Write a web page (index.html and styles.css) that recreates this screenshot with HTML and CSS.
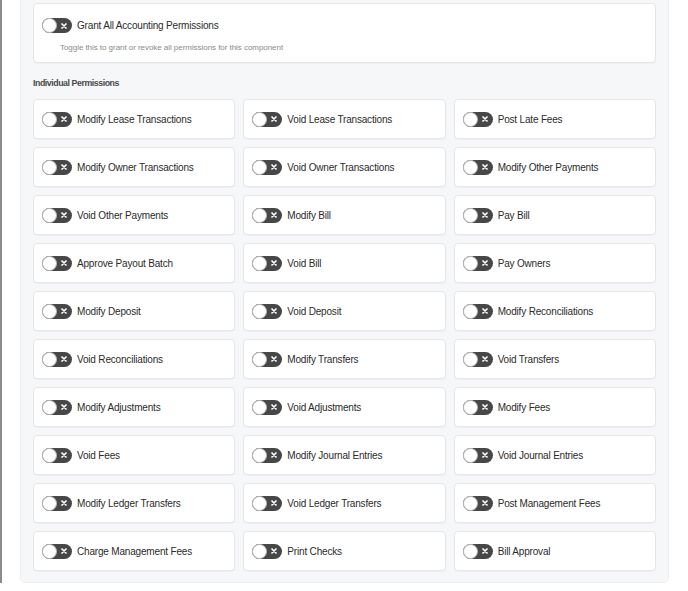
FILE: index.html
```html
<!DOCTYPE html>
<html lang="en">
<head>
    <meta charset="UTF-8">
    <meta name="viewport" content="width=device-width, initial-scale=1.0">
    <title>Accounting Permissions</title>
    <link rel="stylesheet" href="styles.css">
</head>
<body>
    <div class="page">
        <div class="panel">
            <div class="master-card">
                <label class="perm-row">
                    <span class="toggle"><span class="knob"></span><svg class="toggle-x" viewBox="0 0 6 6"><path d="M1 1L5 5M5 1L1 5"/></svg></span>
                    <span class="perm-label">Grant All Accounting Permissions</span>
                </label>
                <div class="master-hint">Toggle this to grant or revoke all permissions for this component</div>
            </div>

            <div class="section-title">Individual Permissions</div>

            <div class="perm-grid">
                <label class="perm-card"><span class="toggle"><span class="knob"></span><svg class="toggle-x" viewBox="0 0 6 6"><path d="M1 1L5 5M5 1L1 5"/></svg></span><span class="perm-label">Modify Lease Transactions</span></label>
                <label class="perm-card"><span class="toggle"><span class="knob"></span><svg class="toggle-x" viewBox="0 0 6 6"><path d="M1 1L5 5M5 1L1 5"/></svg></span><span class="perm-label">Void Lease Transactions</span></label>
                <label class="perm-card"><span class="toggle"><span class="knob"></span><svg class="toggle-x" viewBox="0 0 6 6"><path d="M1 1L5 5M5 1L1 5"/></svg></span><span class="perm-label">Post Late Fees</span></label>

                <label class="perm-card"><span class="toggle"><span class="knob"></span><svg class="toggle-x" viewBox="0 0 6 6"><path d="M1 1L5 5M5 1L1 5"/></svg></span><span class="perm-label">Modify Owner Transactions</span></label>
                <label class="perm-card"><span class="toggle"><span class="knob"></span><svg class="toggle-x" viewBox="0 0 6 6"><path d="M1 1L5 5M5 1L1 5"/></svg></span><span class="perm-label">Void Owner Transactions</span></label>
                <label class="perm-card"><span class="toggle"><span class="knob"></span><svg class="toggle-x" viewBox="0 0 6 6"><path d="M1 1L5 5M5 1L1 5"/></svg></span><span class="perm-label">Modify Other Payments</span></label>

                <label class="perm-card"><span class="toggle"><span class="knob"></span><svg class="toggle-x" viewBox="0 0 6 6"><path d="M1 1L5 5M5 1L1 5"/></svg></span><span class="perm-label">Void Other Payments</span></label>
                <label class="perm-card"><span class="toggle"><span class="knob"></span><svg class="toggle-x" viewBox="0 0 6 6"><path d="M1 1L5 5M5 1L1 5"/></svg></span><span class="perm-label">Modify Bill</span></label>
                <label class="perm-card"><span class="toggle"><span class="knob"></span><svg class="toggle-x" viewBox="0 0 6 6"><path d="M1 1L5 5M5 1L1 5"/></svg></span><span class="perm-label">Pay Bill</span></label>

                <label class="perm-card"><span class="toggle"><span class="knob"></span><svg class="toggle-x" viewBox="0 0 6 6"><path d="M1 1L5 5M5 1L1 5"/></svg></span><span class="perm-label">Approve Payout Batch</span></label>
                <label class="perm-card"><span class="toggle"><span class="knob"></span><svg class="toggle-x" viewBox="0 0 6 6"><path d="M1 1L5 5M5 1L1 5"/></svg></span><span class="perm-label">Void Bill</span></label>
                <label class="perm-card"><span class="toggle"><span class="knob"></span><svg class="toggle-x" viewBox="0 0 6 6"><path d="M1 1L5 5M5 1L1 5"/></svg></span><span class="perm-label">Pay Owners</span></label>

                <label class="perm-card"><span class="toggle"><span class="knob"></span><svg class="toggle-x" viewBox="0 0 6 6"><path d="M1 1L5 5M5 1L1 5"/></svg></span><span class="perm-label">Modify Deposit</span></label>
                <label class="perm-card"><span class="toggle"><span class="knob"></span><svg class="toggle-x" viewBox="0 0 6 6"><path d="M1 1L5 5M5 1L1 5"/></svg></span><span class="perm-label">Void Deposit</span></label>
                <label class="perm-card"><span class="toggle"><span class="knob"></span><svg class="toggle-x" viewBox="0 0 6 6"><path d="M1 1L5 5M5 1L1 5"/></svg></span><span class="perm-label">Modify Reconciliations</span></label>

                <label class="perm-card"><span class="toggle"><span class="knob"></span><svg class="toggle-x" viewBox="0 0 6 6"><path d="M1 1L5 5M5 1L1 5"/></svg></span><span class="perm-label">Void Reconciliations</span></label>
                <label class="perm-card"><span class="toggle"><span class="knob"></span><svg class="toggle-x" viewBox="0 0 6 6"><path d="M1 1L5 5M5 1L1 5"/></svg></span><span class="perm-label">Modify Transfers</span></label>
                <label class="perm-card"><span class="toggle"><span class="knob"></span><svg class="toggle-x" viewBox="0 0 6 6"><path d="M1 1L5 5M5 1L1 5"/></svg></span><span class="perm-label">Void Transfers</span></label>

                <label class="perm-card"><span class="toggle"><span class="knob"></span><svg class="toggle-x" viewBox="0 0 6 6"><path d="M1 1L5 5M5 1L1 5"/></svg></span><span class="perm-label">Modify Adjustments</span></label>
                <label class="perm-card"><span class="toggle"><span class="knob"></span><svg class="toggle-x" viewBox="0 0 6 6"><path d="M1 1L5 5M5 1L1 5"/></svg></span><span class="perm-label">Void Adjustments</span></label>
                <label class="perm-card"><span class="toggle"><span class="knob"></span><svg class="toggle-x" viewBox="0 0 6 6"><path d="M1 1L5 5M5 1L1 5"/></svg></span><span class="perm-label">Modify Fees</span></label>

                <label class="perm-card"><span class="toggle"><span class="knob"></span><svg class="toggle-x" viewBox="0 0 6 6"><path d="M1 1L5 5M5 1L1 5"/></svg></span><span class="perm-label">Void Fees</span></label>
                <label class="perm-card"><span class="toggle"><span class="knob"></span><svg class="toggle-x" viewBox="0 0 6 6"><path d="M1 1L5 5M5 1L1 5"/></svg></span><span class="perm-label">Modify Journal Entries</span></label>
                <label class="perm-card"><span class="toggle"><span class="knob"></span><svg class="toggle-x" viewBox="0 0 6 6"><path d="M1 1L5 5M5 1L1 5"/></svg></span><span class="perm-label">Void Journal Entries</span></label>

                <label class="perm-card"><span class="toggle"><span class="knob"></span><svg class="toggle-x" viewBox="0 0 6 6"><path d="M1 1L5 5M5 1L1 5"/></svg></span><span class="perm-label">Modify Ledger Transfers</span></label>
                <label class="perm-card"><span class="toggle"><span class="knob"></span><svg class="toggle-x" viewBox="0 0 6 6"><path d="M1 1L5 5M5 1L1 5"/></svg></span><span class="perm-label">Void Ledger Transfers</span></label>
                <label class="perm-card"><span class="toggle"><span class="knob"></span><svg class="toggle-x" viewBox="0 0 6 6"><path d="M1 1L5 5M5 1L1 5"/></svg></span><span class="perm-label">Post Management Fees</span></label>

                <label class="perm-card"><span class="toggle"><span class="knob"></span><svg class="toggle-x" viewBox="0 0 6 6"><path d="M1 1L5 5M5 1L1 5"/></svg></span><span class="perm-label">Charge Management Fees</span></label>
                <label class="perm-card"><span class="toggle"><span class="knob"></span><svg class="toggle-x" viewBox="0 0 6 6"><path d="M1 1L5 5M5 1L1 5"/></svg></span><span class="perm-label">Print Checks</span></label>
                <label class="perm-card"><span class="toggle"><span class="knob"></span><svg class="toggle-x" viewBox="0 0 6 6"><path d="M1 1L5 5M5 1L1 5"/></svg></span><span class="perm-label">Bill Approval</span></label>
            </div>
        </div>
    </div>
</body>
</html>
```

FILE: styles.css
```css
body {
    font-family: 'Liberation Sans', Arial, sans-serif;
    margin: 0;
    padding: 0;
    background-color: #fff;
    color: #333;
    overflow: hidden;
}
.page {
    min-height: 591px;
    border-left: 2px solid #8c8c8c;
    padding: 0 19px 0 18px;
    box-sizing: border-box;
}
.panel {
    margin-top: -10px;
    background-color: #f6f7f9;
    border: 1px solid #eceef1;
    border-radius: 5px;
    padding: 12px 12px 11px;
}
.master-card {
    background-color: #fff;
    border: 1px solid #e4e6e9;
    border-radius: 4px;
    padding: 14px 9px 9px 8px;
    box-shadow: 0 1px 1px rgba(0, 0, 0, 0.03);
}
.perm-row {
    display: flex;
    align-items: center;
    height: 15px;
}
.master-hint {
    margin-top: 10px;
    padding-left: 18px;
    font-size: 8px;
    letter-spacing: -0.05px;
    line-height: 10px;
    color: #8a8a8a;
}
.section-title {
    margin: 15px 0 11px;
    font-size: 8.8px;
    letter-spacing: -0.45px;
    line-height: 10px;
    font-weight: bold;
    color: #4a4a4a;
}
.perm-grid {
    display: grid;
    grid-template-columns: repeat(3, 1fr);
    gap: 8px;
}
.perm-card {
    display: flex;
    align-items: center;
    height: 40px;
    box-sizing: border-box;
    padding-left: 8px;
    background-color: #fff;
    border: 1px solid #e4e6e9;
    border-radius: 4px;
    box-shadow: 0 1px 1px rgba(0, 0, 0, 0.03);
}
.perm-label {
    margin-left: 5px;
    font-size: 10px;
    letter-spacing: -0.18px;
    line-height: 15px;
    color: #2b2b2b;
    white-space: nowrap;
}
.toggle {
    position: relative;
    display: inline-flex;
    align-items: center;
    justify-content: flex-end;
    flex-shrink: 0;
    width: 30px;
    height: 15px;
    box-sizing: border-box;
    padding-right: 5px;
    background-color: #474747;
    border-radius: 8px;
}
.knob {
    position: absolute;
    left: 0;
    top: 0;
    width: 15px;
    height: 15px;
    box-sizing: border-box;
    background-color: #fff;
    border: 1px solid #b9b9b9;
    border-radius: 50%;
}
.toggle-x {
    width: 6px;
    height: 6px;
}
.toggle-x path {
    stroke: #fff;
    stroke-width: 1.7;
    stroke-linecap: round;
    fill: none;
}
```
